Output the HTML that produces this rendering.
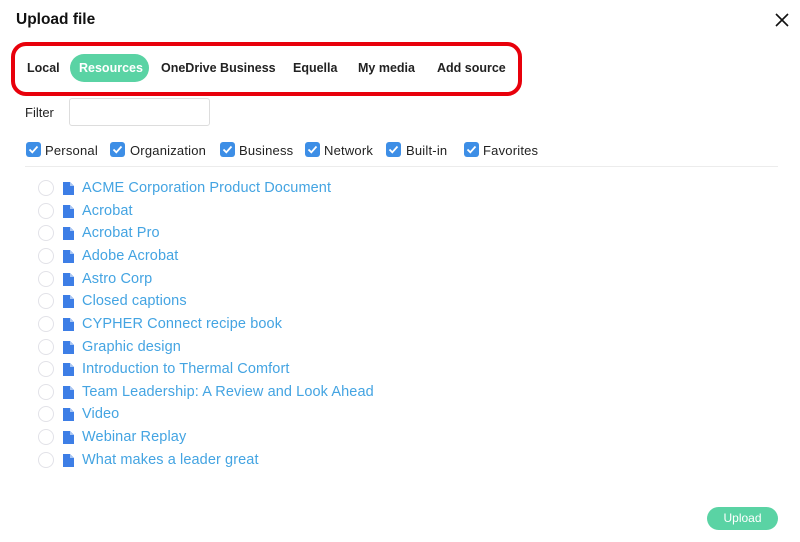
<!DOCTYPE html>
<html><head><meta charset="utf-8"><style>
*{margin:0;padding:0;box-sizing:border-box}
body{width:800px;height:542px;background:#fff;font-family:"Liberation Sans",sans-serif;position:relative;overflow:hidden;color:#222}
.a{position:absolute;white-space:nowrap}
.title{left:16px;top:11px;font-size:15.5px;font-weight:bold;color:#111}
.box{left:11px;top:42px;width:511px;height:54px;border:4px solid #e8000b;border-radius:15px}
.tab{top:61px;font-size:12.5px;font-weight:bold;color:#222;letter-spacing:0}
.pill{left:70px;top:54px;width:79px;height:28px;border-radius:14px;background:#5ad3a4}
.cb{top:142px;width:15px;height:15px;border-radius:3px;background:#3d8ee6}
.cb svg{position:absolute;left:2px;top:2px}
.cl{top:143px;font-size:13px;color:#222;letter-spacing:0.2px}
.row{left:38px;height:20px}
.rad{position:absolute;left:0;top:2px;width:16px;height:16px;border:1px solid #e2e2e8;border-radius:50%}
.doc{position:absolute;left:25px;top:4px}
.ft{position:absolute;left:44px;top:2px;font-size:14.5px;color:#44a4e2;letter-spacing:0.1px}
</style></head><body>
<div class="a title">Upload file</div>
<svg class="a" style="left:775px;top:13px" width="14" height="14" viewBox="0 0 14 14"><path d="M1 1L13 13M13 1L1 13" stroke="#111" stroke-width="1.6"/></svg>
<div class="a box"></div>
<div class="a pill"></div>
<div class="a tab" style="left:27px">Local</div>
<div class="a tab" style="left:79px;color:#fff">Resources</div>
<div class="a tab" style="left:161px">OneDrive Business</div>
<div class="a tab" style="left:293px">Equella</div>
<div class="a tab" style="left:358px">My media</div>
<div class="a tab" style="left:437px">Add source</div>
<div class="a" style="left:25px;top:105px;font-size:13px">Filter</div>
<div class="a" style="left:69px;top:98px;width:141px;height:28px;border:1px solid #ddd;border-radius:3px"></div>

<div class="a cb" style="left:26px"><svg width="11" height="11" viewBox="0 0 11 11"><path d="M1.5 5.5L4.3 8.3L9.5 2.5" stroke="#fff" stroke-width="1.8" fill="none"/></svg></div>
<div class="a cl" style="left:45px">Personal</div>
<div class="a cb" style="left:110px"><svg width="11" height="11" viewBox="0 0 11 11"><path d="M1.5 5.5L4.3 8.3L9.5 2.5" stroke="#fff" stroke-width="1.8" fill="none"/></svg></div>
<div class="a cl" style="left:130px">Organization</div>
<div class="a cb" style="left:220px"><svg width="11" height="11" viewBox="0 0 11 11"><path d="M1.5 5.5L4.3 8.3L9.5 2.5" stroke="#fff" stroke-width="1.8" fill="none"/></svg></div>
<div class="a cl" style="left:239px">Business</div>
<div class="a cb" style="left:305px"><svg width="11" height="11" viewBox="0 0 11 11"><path d="M1.5 5.5L4.3 8.3L9.5 2.5" stroke="#fff" stroke-width="1.8" fill="none"/></svg></div>
<div class="a cl" style="left:324px">Network</div>
<div class="a cb" style="left:386px"><svg width="11" height="11" viewBox="0 0 11 11"><path d="M1.5 5.5L4.3 8.3L9.5 2.5" stroke="#fff" stroke-width="1.8" fill="none"/></svg></div>
<div class="a cl" style="left:406px">Built-in</div>
<div class="a cb" style="left:464px"><svg width="11" height="11" viewBox="0 0 11 11"><path d="M1.5 5.5L4.3 8.3L9.5 2.5" stroke="#fff" stroke-width="1.8" fill="none"/></svg></div>
<div class="a cl" style="left:483px">Favorites</div>
<div class="a" style="left:25px;top:166px;width:753px;height:1px;background:#ececec"></div>

<div class="a row" style="top:178px"><div class="rad"></div><svg class="doc" width="11" height="13" viewBox="0 0 11 13"><path d="M0 0H7L11 4V13H0Z" fill="#3d7ee6"/><path d="M7 0V4H11" fill="#a9c6f3"/></svg><span class="ft">ACME Corporation Product Document</span></div>
<div class="a row" style="top:201px"><div class="rad"></div><svg class="doc" width="11" height="13" viewBox="0 0 11 13"><path d="M0 0H7L11 4V13H0Z" fill="#3d7ee6"/><path d="M7 0V4H11" fill="#a9c6f3"/></svg><span class="ft">Acrobat</span></div>
<div class="a row" style="top:223px"><div class="rad"></div><svg class="doc" width="11" height="13" viewBox="0 0 11 13"><path d="M0 0H7L11 4V13H0Z" fill="#3d7ee6"/><path d="M7 0V4H11" fill="#a9c6f3"/></svg><span class="ft">Acrobat Pro</span></div>
<div class="a row" style="top:246px"><div class="rad"></div><svg class="doc" width="11" height="13" viewBox="0 0 11 13"><path d="M0 0H7L11 4V13H0Z" fill="#3d7ee6"/><path d="M7 0V4H11" fill="#a9c6f3"/></svg><span class="ft">Adobe Acrobat</span></div>
<div class="a row" style="top:269px"><div class="rad"></div><svg class="doc" width="11" height="13" viewBox="0 0 11 13"><path d="M0 0H7L11 4V13H0Z" fill="#3d7ee6"/><path d="M7 0V4H11" fill="#a9c6f3"/></svg><span class="ft">Astro Corp</span></div>
<div class="a row" style="top:291px"><div class="rad"></div><svg class="doc" width="11" height="13" viewBox="0 0 11 13"><path d="M0 0H7L11 4V13H0Z" fill="#3d7ee6"/><path d="M7 0V4H11" fill="#a9c6f3"/></svg><span class="ft">Closed captions</span></div>
<div class="a row" style="top:314px"><div class="rad"></div><svg class="doc" width="11" height="13" viewBox="0 0 11 13"><path d="M0 0H7L11 4V13H0Z" fill="#3d7ee6"/><path d="M7 0V4H11" fill="#a9c6f3"/></svg><span class="ft">CYPHER Connect recipe book</span></div>
<div class="a row" style="top:337px"><div class="rad"></div><svg class="doc" width="11" height="13" viewBox="0 0 11 13"><path d="M0 0H7L11 4V13H0Z" fill="#3d7ee6"/><path d="M7 0V4H11" fill="#a9c6f3"/></svg><span class="ft">Graphic design</span></div>
<div class="a row" style="top:359px"><div class="rad"></div><svg class="doc" width="11" height="13" viewBox="0 0 11 13"><path d="M0 0H7L11 4V13H0Z" fill="#3d7ee6"/><path d="M7 0V4H11" fill="#a9c6f3"/></svg><span class="ft">Introduction to Thermal Comfort</span></div>
<div class="a row" style="top:382px"><div class="rad"></div><svg class="doc" width="11" height="13" viewBox="0 0 11 13"><path d="M0 0H7L11 4V13H0Z" fill="#3d7ee6"/><path d="M7 0V4H11" fill="#a9c6f3"/></svg><span class="ft">Team Leadership: A Review and Look Ahead</span></div>
<div class="a row" style="top:404px"><div class="rad"></div><svg class="doc" width="11" height="13" viewBox="0 0 11 13"><path d="M0 0H7L11 4V13H0Z" fill="#3d7ee6"/><path d="M7 0V4H11" fill="#a9c6f3"/></svg><span class="ft">Video</span></div>
<div class="a row" style="top:427px"><div class="rad"></div><svg class="doc" width="11" height="13" viewBox="0 0 11 13"><path d="M0 0H7L11 4V13H0Z" fill="#3d7ee6"/><path d="M7 0V4H11" fill="#a9c6f3"/></svg><span class="ft">Webinar Replay</span></div>
<div class="a row" style="top:450px"><div class="rad"></div><svg class="doc" width="11" height="13" viewBox="0 0 11 13"><path d="M0 0H7L11 4V13H0Z" fill="#3d7ee6"/><path d="M7 0V4H11" fill="#a9c6f3"/></svg><span class="ft">What makes a leader great</span></div>

<div class="a" style="left:707px;top:507px;width:71px;height:23px;border-radius:12px;background:#5ad3a4;color:#fff;font-size:12px;text-align:center;line-height:23px">Upload</div>
</body></html>
